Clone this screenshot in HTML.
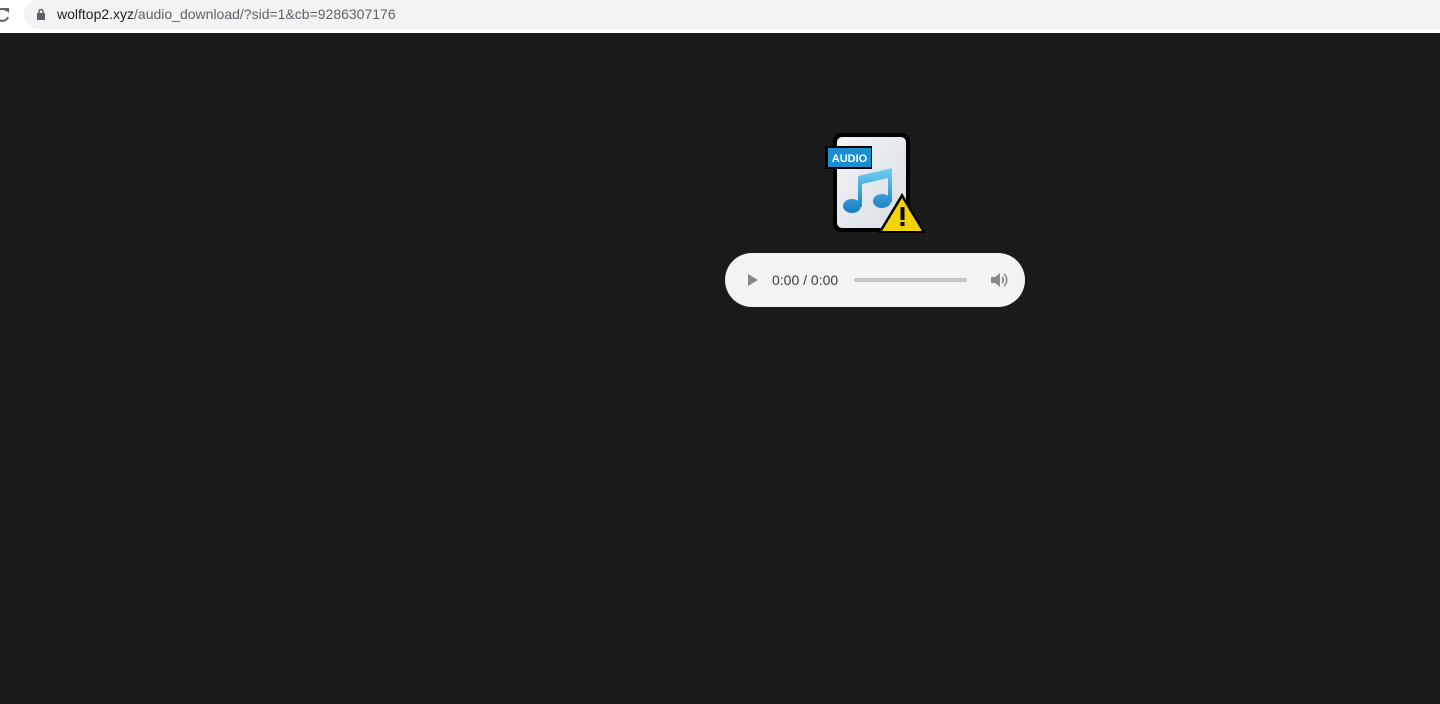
<!DOCTYPE html><html><head><style>
body{margin:0;width:1440px;height:704px;background:#1b1b1b;overflow:hidden;font-family:"Liberation Sans",Arial,sans-serif}
.bar{position:absolute;left:0;top:0;width:1440px;height:33px;background:#fff}
.pill{position:absolute;left:24px;top:0;width:1440px;height:29px;background:#f1f3f4;border-radius:15px}
.url{position:absolute;left:57px;top:6px;font-size:14px;color:#5f6368}
.url b{font-weight:normal;color:#202124}
.player{position:absolute;left:725px;top:253px;width:300px;height:54px;background:#f1f3f4;border-radius:27px}
</style></head><body>
<div class="bar"><div class="pill"></div>
<svg style="position:absolute;left:-4px;top:7px" width="14" height="16" viewBox="0 0 14 16"><path d="M11 4A6 6 0 1 0 12 10" fill="none" stroke="#5f6368" stroke-width="2"/><path d="M8 1h5v5z" fill="#5f6368"/></svg>
<svg style="position:absolute;left:36px;top:8px" width="10" height="12" viewBox="0 0 10 12"><rect x="1" y="5" width="8" height="7" fill="#5f6368"/><path d="M3 5V3.5a2 2 0 0 1 4 0V5" fill="none" stroke="#5f6368" stroke-width="1.5"/></svg>
<div class="url"><b>wolftop2.xyz</b>/audio_download/?sid=1&amp;cb=9286307176</div></div>
<svg style="position:absolute;left:820px;top:128px" width="110" height="110" viewBox="820 128 110 110">
<defs><linearGradient id="d" x1="0" y1="0" x2="1" y2="1"><stop offset="0" stop-color="#f2f4f6"/><stop offset="1" stop-color="#d9dde2"/></linearGradient>
<linearGradient id="n" gradientUnits="userSpaceOnUse" x1="0" y1="168" x2="0" y2="214"><stop offset="0" stop-color="#6fd0f5"/><stop offset="1" stop-color="#1479c0"/></linearGradient></defs>
<rect x="833" y="133" width="77" height="99" rx="8" fill="#000"/>
<rect x="837" y="137" width="69" height="91" rx="5" fill="url(#d)"/>
<rect x="825" y="146" width="47" height="23" fill="#000"/>
<rect x="828" y="148" width="43" height="19" fill="#1a8fd0"/>
<text x="849.5" y="162" font-size="11" font-weight="bold" fill="#fff" text-anchor="middle" font-family="Liberation Sans">AUDIO</text>
<path d="M858 176L892 168V202H888V178L862 184V207H858Z" fill="url(#n)"/>
<ellipse cx="852" cy="206" rx="9" ry="7" fill="url(#n)"/>
<ellipse cx="882" cy="201" rx="9" ry="7" fill="url(#n)"/>
<path d="M902 193L926 233H878Z" fill="#000"/>
<path d="M902 198L922 231H882Z" fill="#f2d200"/>
<rect x="900.5" y="207" width="4" height="13" fill="#000"/><rect x="900.5" y="222" width="4" height="4" fill="#000"/>
</svg>
<div class="player">
<svg style="position:absolute;left:22px;top:20px" width="12" height="14"><path d="M1 1L11 7L1 13Z" fill="#8a8a8a"/></svg>
<div style="position:absolute;left:47px;top:19px;font-size:14px;color:#3c3c3c">0:00 / 0:00</div>
<div style="position:absolute;left:129px;top:25px;width:113px;height:4px;background:#c4c4c4;border-radius:2px"></div>
<svg style="position:absolute;left:265px;top:18px" width="18" height="18" viewBox="0 0 18 18"><path d="M1 6h4l5-4v14l-5-4H1z" fill="#8a8a8a"/><path d="M12 6a4 4 0 0 1 0 6M14 3a8 8 0 0 1 0 12" fill="none" stroke="#8a8a8a" stroke-width="1.6"/></svg>
</div>
</body></html>
